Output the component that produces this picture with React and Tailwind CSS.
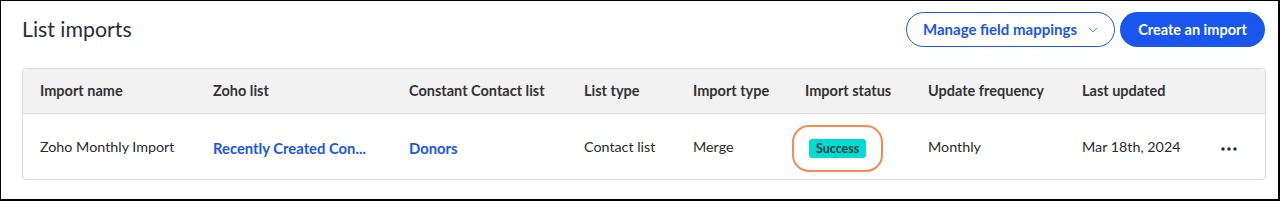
import { ChevronDown } from 'lucide-react'

const columns = [
  'Import name',
  'Zoho list',
  'Constant Contact list',
  'List type',
  'Import type',
  'Import status',
  'Update frequency',
  'Last updated',
  '',
]

const gridCols = 'grid grid-cols-[173px_196px_175px_109px_112px_123px_154px_140px_1fr]'

export default function App() {
  return (
    <div
      className="w-[1280px] h-[201px] bg-white border-t border-l border-r-2 border-b-2 border-black text-[#2b2b2b]"
      style={{ fontFamily: 'Lato, "Open Sans", sans-serif' }}
    >
      {/* Header */}
      <div className="flex items-center justify-between pl-[21px] pr-[13px] pt-[11px]">
        <h1 className="text-[21.3px] leading-[35px] text-[#2d2d3a]">List imports</h1>
        <div className="flex items-center gap-[5px]">
          <button className="h-[35px] w-[209px] flex items-center justify-between pl-[16px] pr-[14px] rounded-full border border-[#1856ed] text-[#1856ed] text-[15px] font-bold">
            Manage field mappings
            <ChevronDown className="w-[14px] h-[14px]" strokeWidth={1.5} />
          </button>
          <button className="h-[35px] w-[145px] rounded-full bg-[#1856ed] text-white text-[14.5px] font-bold">
            Create an import
          </button>
        </div>
      </div>

      {/* Table */}
      <div className="ml-[21px] mt-[21px] w-[1244px] rounded-[4px] border border-[#dcdcdc] overflow-hidden">
        <div className={`${gridCols} h-[45px] items-center bg-[#f2f2f2] border-b border-[#d9d9d9]`}>
          {columns.map((c, i) => (
            <div key={i} className="pl-[17px] text-[14.5px] font-bold text-[#333333] whitespace-nowrap">
              {c}
            </div>
          ))}
        </div>
        <div className={`${gridCols} h-[65px] items-center text-[14.3px] whitespace-nowrap`}>
          <div className="pl-[17px]">Zoho Monthly Import</div>
          <div className="pl-[17px] pt-[4px] text-[14.8px] font-bold text-[#1856ed]">Recently Created Con...</div>
          <div className="pl-[17px] pt-[4px] text-[14.8px] font-bold text-[#1856ed]">Donors</div>
          <div className="pl-[17px]">Contact list</div>
          <div className="pl-[17px]">Merge</div>
          <div className="pl-[4px] pt-[3px]">
            <div className="inline-flex items-center border-[2.5px] border-[#f58b53] rounded-[17px] px-[15px] py-[12px]">
              <span className="bg-[#00dcd4] text-[#1f3b3b] text-[12.5px] font-bold rounded-[3px] px-[7px] h-[19px] leading-[19px]">
                Success
              </span>
            </div>
          </div>
          <div className="pl-[17px]">Monthly</div>
          <div className="pl-[17px]">Mar 18th, 2024</div>
          <div className="pl-[16px] pt-[4px]">
            <svg width="16" height="4" viewBox="0 0 16 4" fill="#1f2937">
              <circle cx="2" cy="2" r="1.7" />
              <circle cx="8" cy="2" r="1.7" />
              <circle cx="14" cy="2" r="1.7" />
            </svg>
          </div>
        </div>
      </div>
    </div>
  )
}
